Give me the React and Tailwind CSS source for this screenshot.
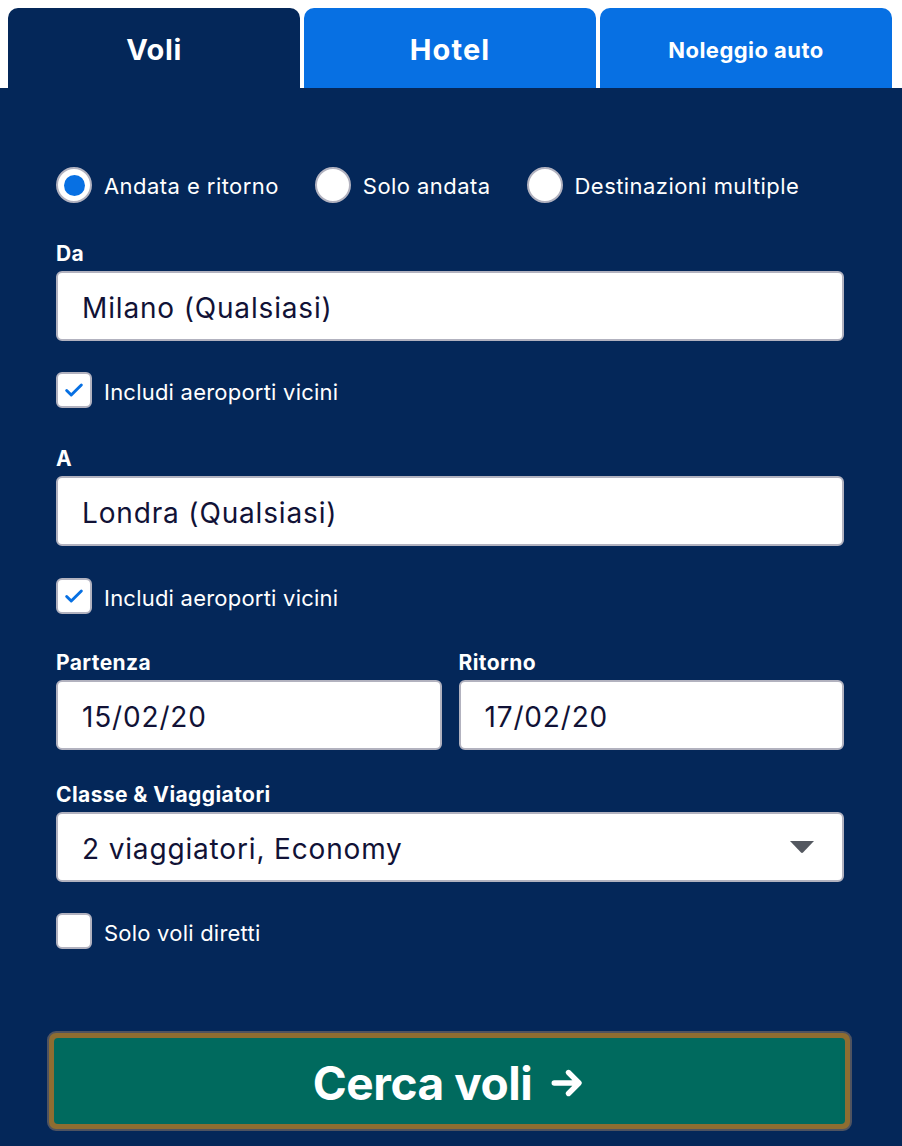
import React from 'react';

const font = {fontFamily: 'Inter, "Liberation Sans", sans-serif'};

function Radio({checked, label}) {
  return (
    <label className="flex items-center gap-3">
      <span className="flex h-9 w-9 items-center justify-center rounded-full border-2 border-[#b2b2bf] bg-white">
        {checked && <span className="h-[21px] w-[21px] rounded-full bg-[#0770e3]" />}
      </span>
      <span className="pt-[3px] text-[22px] tracking-[0.02em] text-white">{label}</span>
    </label>
  );
}

function Checkbox({checked, label}) {
  return (
    <label className="flex h-9 items-center gap-3">
      <span className="flex h-9 w-9 items-center justify-center rounded-[6px] border-2 border-[#b2b2bf] bg-white">
        {checked && (
          <svg width="22" height="22" viewBox="0 0 24 24" fill="none">
            <path d="M4 12.5l5 5L20 6.5" stroke="#0770e3" strokeWidth="3.2" strokeLinecap="round" strokeLinejoin="round" />
          </svg>
        )}
      </span>
      <span className="pt-[5px] text-[22px] tracking-[0.01em] text-white">{label}</span>
    </label>
  );
}

function Field({label, value, className = '', children}) {
  return (
    <div className={className}>
      <div className="h-6 text-[21px] font-bold leading-6 tracking-[0.02em] text-white">{label}</div>
      <div className="mt-[5px] flex h-[70px] items-center justify-between rounded-[6px] border-2 border-[#b2b2bf] bg-white pl-6 pr-7">
        <span className="pt-[4px] text-[28px] tracking-[0.03em] text-[#111236]">{value}</span>
        {children}
      </div>
    </div>
  );
}

export default function App() {
  return (
    <div className="w-[902px] bg-white" style={font}>
      <div className="flex gap-1 px-2 pt-2">
        <div className="flex h-20 w-[292px] items-center justify-center rounded-t-[10px] bg-[#042759] pt-1 text-[29px] font-bold tracking-[0.02em] text-white">
          Voli
        </div>
        <div className="flex h-20 w-[292px] items-center justify-center rounded-t-[10px] bg-[#0770e3] pt-1 text-[29px] font-bold tracking-[0.04em] text-white">
          Hotel
        </div>
        <div className="flex h-20 w-[292px] items-center justify-center rounded-t-[10px] bg-[#0770e3] pt-1 text-[22px] font-bold tracking-[0.02em] text-white">
          Noleggio auto
        </div>
      </div>

      <div className="flex flex-col bg-[#042759] pb-4 pl-14 pr-[58px] pt-[79px]">
        <div className="flex items-center gap-9">
          <Radio checked label="Andata e ritorno" />
          <Radio label="Solo andata" />
          <Radio label="Destinazioni multiple" />
        </div>

        <Field className="mt-[39px]" label="Da" value="Milano (Qualsiasi)" />
        <div className="mt-[31px]">
          <Checkbox checked label="Includi aeroporti vicini" />
        </div>

        <Field className="mt-[39px]" label="A" value="Londra (Qualsiasi)" />
        <div className="mt-[32px]">
          <Checkbox checked label="Includi aeroporti vicini" />
        </div>

        <div className="mt-[37px] flex gap-[17px]">
          <Field className="flex-1" label="Partenza" value="15/02/20" />
          <Field className="flex-1" label="Ritorno" value="17/02/20" />
        </div>

        <Field className="mt-[33px]" label="Classe & Viaggiatori" value="2 viaggiatori, Economy">
          <svg width="24" height="12" viewBox="0 0 24 12">
            <path d="M0 0h24L13 11.5a1.4 1.4 0 0 1-2 0z" fill="#545860" />
          </svg>
        </Field>

        <div className="mt-[31px]">
          <Checkbox label="Solo voli diretti" />
        </div>

        <div className="ml-[-9px] mt-[82px] w-[805px] rounded-[9px] border-2 border-[#4f5360] bg-[#8e6d31] p-[5px]">
          <button className="flex h-[86px] w-full items-center justify-center gap-4 rounded-[4px] bg-[#006a5e] pt-1 text-[46px] font-bold tracking-[-0.01em] text-white">
            Cerca voli
            <svg width="38" height="36" viewBox="0 0 24 24" fill="none">
              <path d="M3.5 12h16M13 5l7 7-7 7" stroke="white" strokeWidth="3.6" strokeLinecap="round" strokeLinejoin="round" />
            </svg>
          </button>
        </div>
      </div>
    </div>
  );
}
